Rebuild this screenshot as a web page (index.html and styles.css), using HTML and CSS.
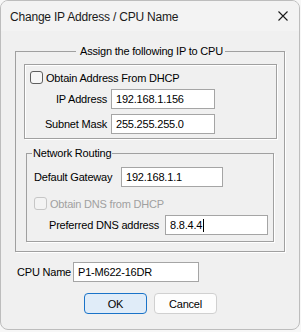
FILE: index.html
```html
<!DOCTYPE html>
<html lang="en">
<head>
    <meta charset="UTF-8">
    <title>Change IP Address / CPU Name</title>
    <link rel="stylesheet" href="styles.css">
</head>
<body>
    <div class="dialog">
        <div class="titlebar">
            <span class="title">Change IP Address / CPU Name</span>
            <svg class="close" width="10" height="10" viewBox="0 0 10 10">
                <path d="M0.5 0.5 L9.5 9.5 M9.5 0.5 L0.5 9.5" stroke="#1a1a1a" stroke-width="1.1" fill="none"/>
            </svg>
        </div>

        <div class="content">
            <fieldset class="group-outer">
                <legend class="legend-center">Assign the following IP to CPU</legend>

                <div class="group-dhcp">
                    <label class="check-row">
                        <span class="checkbox"></span>
                        <span>Obtain Address From DHCP</span>
                    </label>
                    <div class="field-row first">
                        <span class="label label-right">IP Address</span>
                        <div class="edit w-ip">192.168.1.156</div>
                    </div>
                    <div class="field-row">
                        <span class="label label-right">Subnet Mask</span>
                        <div class="edit w-ip">255.255.255.0</div>
                    </div>
                </div>

                <fieldset class="group-routing">
                    <legend class="legend-left">Network Routing</legend>
                    <div class="field-row">
                        <span class="label label-gateway">Default Gateway</span>
                        <div class="edit w-gw">192.168.1.1</div>
                    </div>
                    <label class="check-row disabled">
                        <span class="checkbox"></span>
                        <span>Obtain DNS from DHCP</span>
                    </label>
                    <div class="field-row dns">
                        <span class="label label-dns">Preferred DNS address</span>
                        <div class="edit w-dns">8.8.4.4<span class="caret"></span></div>
                    </div>
                </fieldset>
            </fieldset>

            <div class="field-row cpu">
                <span class="label label-cpu">CPU Name</span>
                <div class="edit w-cpu">P1-M622-16DR</div>
            </div>

            <div class="buttons">
                <button class="btn default">OK</button>
                <button class="btn">Cancel</button>
            </div>
        </div>
    </div>
</body>
</html>
```

FILE: styles.css
```css
body {
    margin: 0;
    padding: 0;
    background-color: #f7f7f7;
    font-family: "Liberation Sans", Arial, sans-serif;
    font-size: 11px;
    letter-spacing: -0.2px;
    color: #000;
}

.dialog {
    box-sizing: border-box;
    width: 300px;
    height: 330px;
    background-color: #f0f0f0;
    border: 1px solid #bdbdbd;
    border-radius: 8px;
    overflow: hidden;
}

.titlebar {
    height: 30px;
    background-color: #f3f3f3;
    display: flex;
    align-items: center;
    justify-content: space-between;
    padding: 0 11px 0 9px;
}

.title {
    font-size: 12px;
    color: #1a1a1a;
    margin-top: 1px;
}

.close {
    margin-top: -1px;
}

.content {
    padding: 14px 0 0 14px;
}

fieldset {
    margin: 0;
    border: 1px solid #a0a0a0;
    box-shadow: 1px 1px 0 #fff;
    min-width: 0;
}

legend {
    line-height: 13px;
    padding: 0 1px;
}

.group-outer {
    box-sizing: border-box;
    width: 270px;
    padding: 6px 7px 9px 8px;
}

.legend-center {
    margin: 0 auto;
    padding: 0 2px 0 4px;
}

.group-dhcp {
    box-sizing: border-box;
    height: 75px;
    border: 1px solid #a0a0a0;
    box-shadow: 1px 1px 0 #fff, inset 1px 1px 0 #fff;
    padding: 6px 5px 4px 5px;
}

.check-row {
    display: flex;
    align-items: center;
    height: 13px;
    gap: 3px;
    white-space: nowrap;
}

.checkbox {
    box-sizing: border-box;
    flex: none;
    width: 13px;
    height: 13px;
    border: 1px solid #5f5f5f;
    border-radius: 3px;
    background-color: #f7f7f7;
}

.check-row.disabled {
    color: #a0a0a0;
    margin-top: 10px;
}

.check-row.disabled .checkbox {
    border-color: #c6c6c6;
    background-color: #f3f3f3;
}

.field-row {
    display: flex;
    align-items: center;
    margin-top: 5px;
}

.label {
    flex: none;
    white-space: nowrap;
    margin-right: 4px;
}

.label-right {
    width: 77px;
    text-align: right;
}

.edit {
    box-sizing: border-box;
    flex: none;
    height: 20px;
    line-height: 18px;
    border: 1px solid #a5a5a5;
    background-color: #fff;
    padding-left: 4px;
    white-space: nowrap;
}

.w-ip { width: 104px; }
.w-gw { width: 102px; }
.w-dns { width: 103px; }
.w-cpu { width: 126px; }

.caret {
    display: inline-block;
    width: 1px;
    height: 13px;
    background-color: #000;
    vertical-align: -3px;
    margin-left: 1px;
}

.group-routing {
    box-sizing: border-box;
    width: 248px;
    margin: 8px 0 0 2px;
    padding: 7px 6px 6px 7px;
}

.legend-left {
    margin-left: -2px;
}

.group-routing .field-row {
    margin-top: 0;
}

.label-gateway {
    width: 83px;
}

.group-routing .field-row.dns {
    margin-top: 5px;
    padding-left: 15px;
}

.label-dns {
    width: 112px;
}

.field-row.cpu {
    margin-top: 10px;
    padding-left: 2px;
}

.label-cpu {
    width: 52px;
}

.buttons {
    display: flex;
    gap: 7px;
    margin: 11px 0 0 69px;
}

.btn {
    box-sizing: border-box;
    width: 63px;
    height: 21px;
    font-family: "Liberation Sans", Arial, sans-serif;
    font-size: 11px;
    letter-spacing: -0.2px;
    color: #000;
    background-color: #fdfdfd;
    border: 1px solid #d0d0d0;
    border-radius: 4px;
    padding: 0;
}

.btn.default {
    background-color: #e0ecf8;
    border-color: #1a73c8;
}
```
